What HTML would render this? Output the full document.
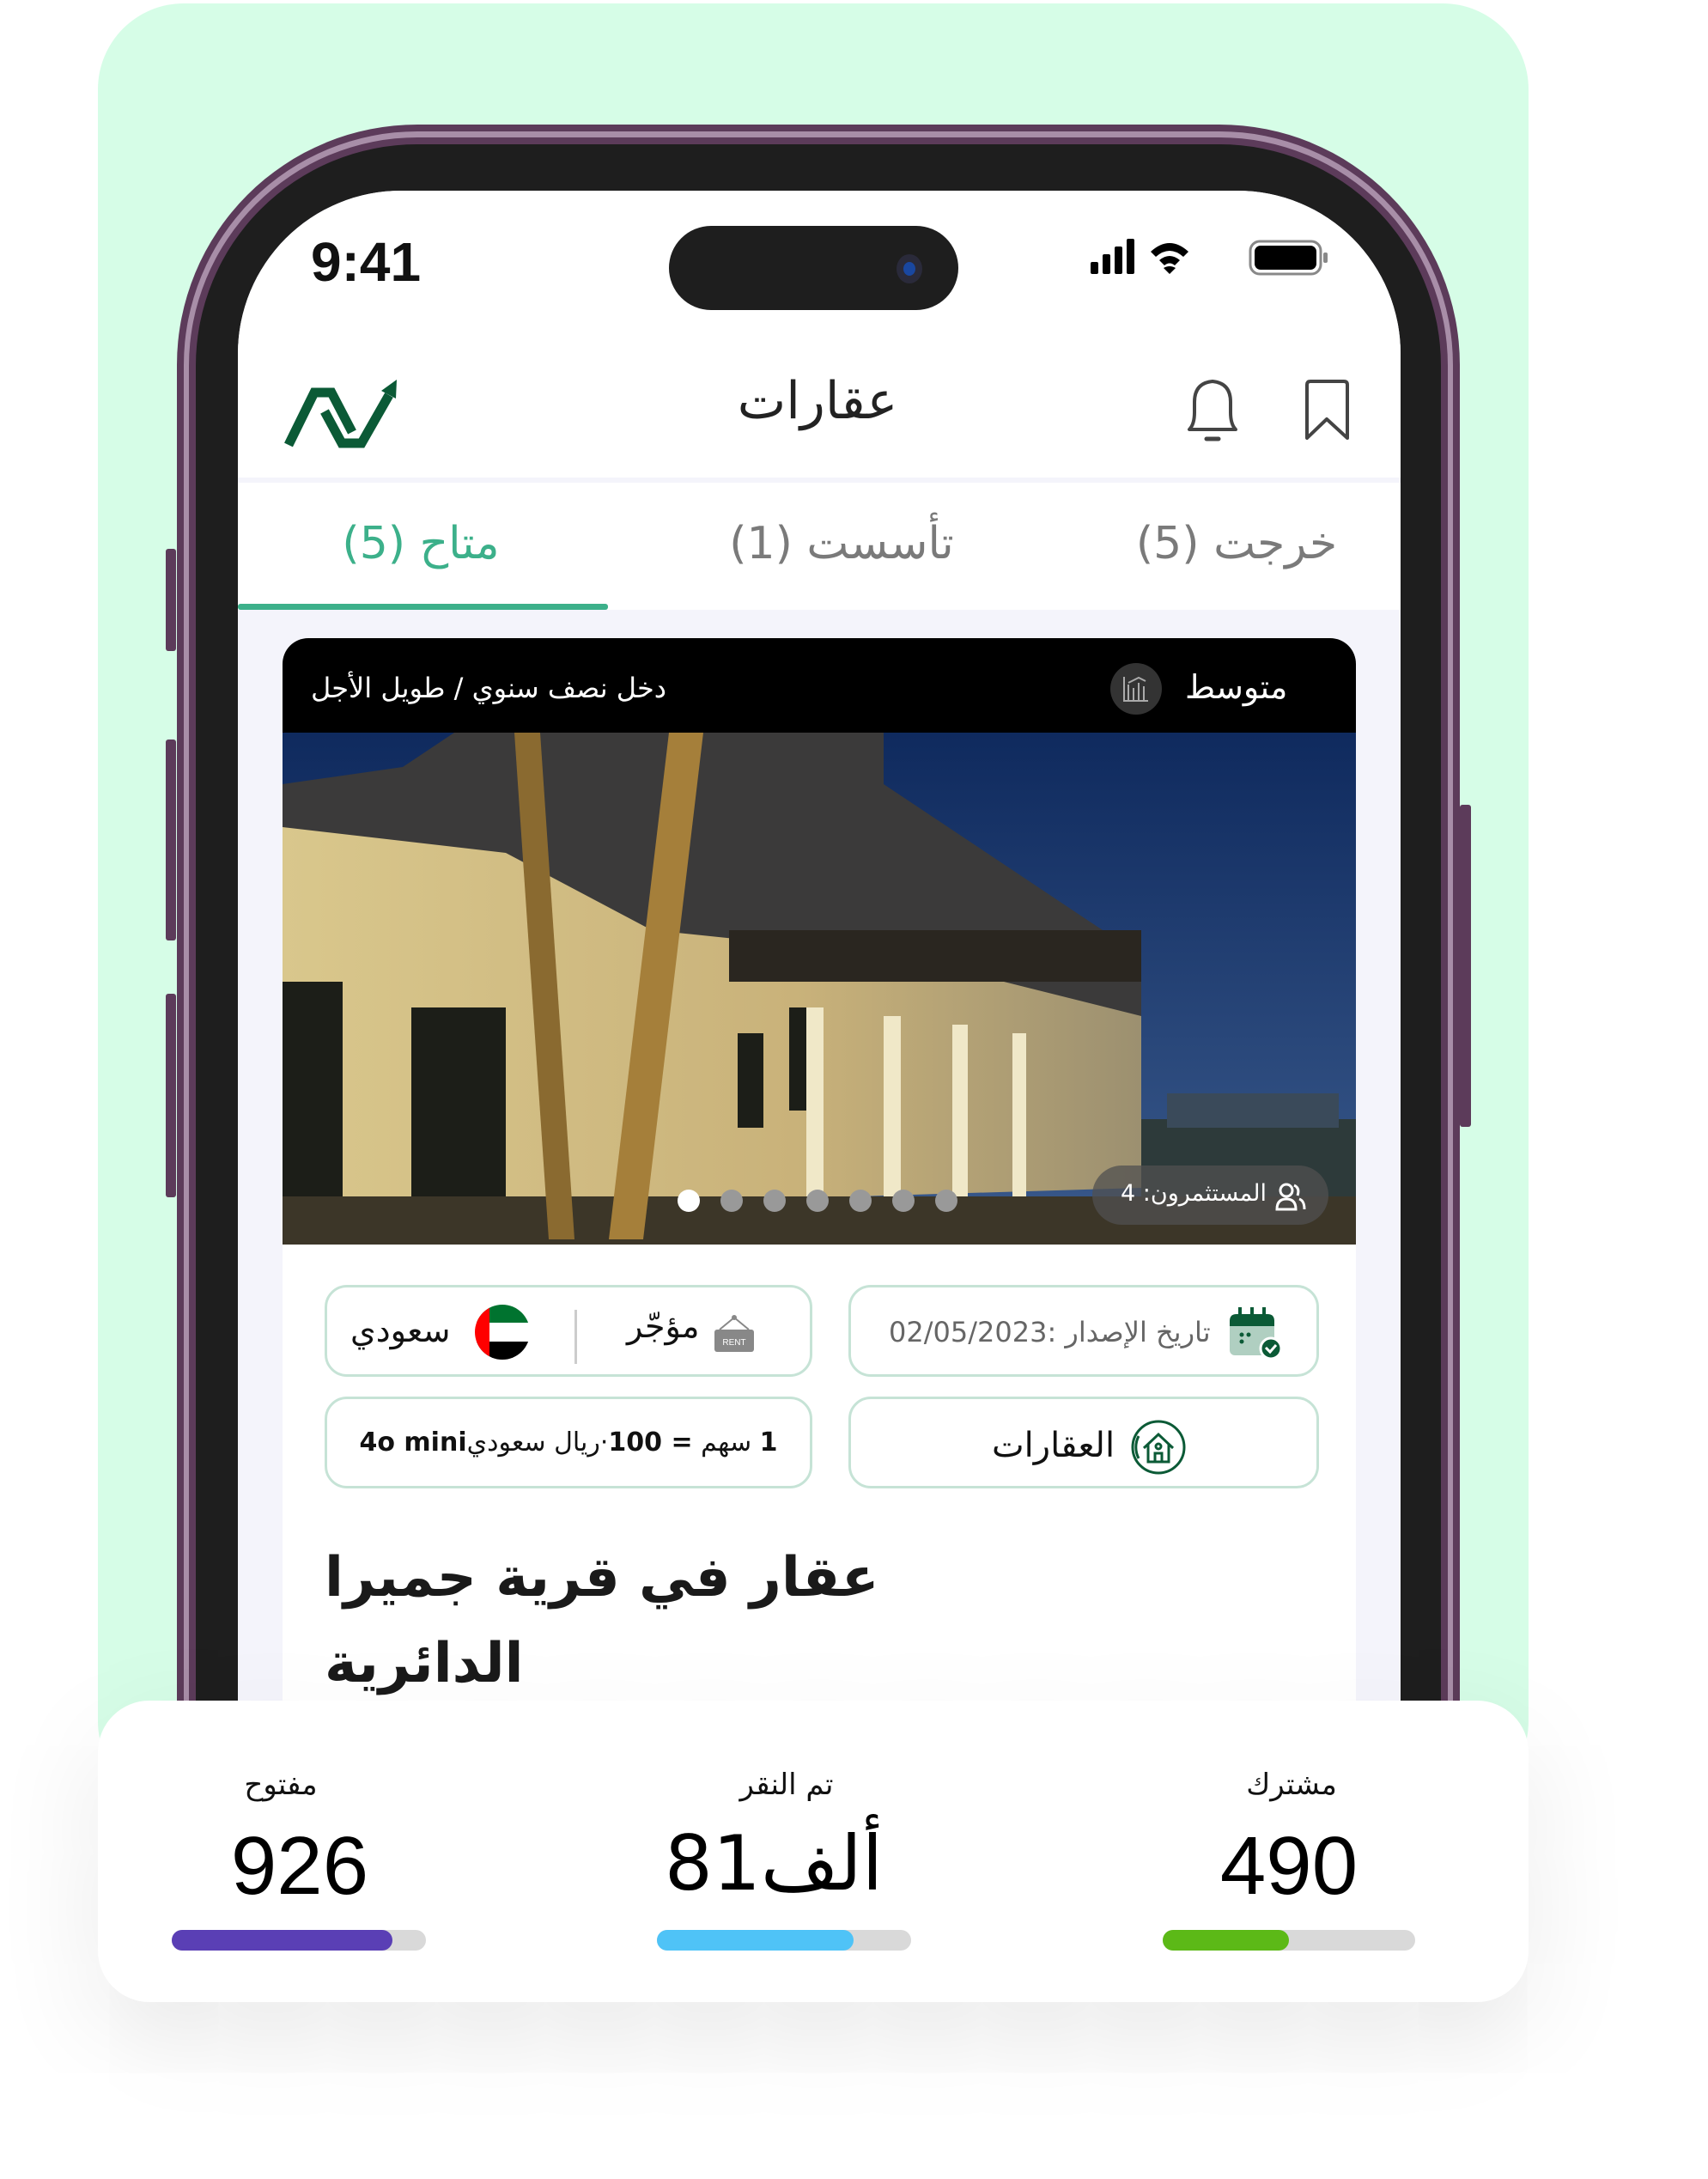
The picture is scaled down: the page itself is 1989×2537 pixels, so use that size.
<!DOCTYPE html>
<html><head><meta charset="utf-8"><style>
*{margin:0;padding:0;box-sizing:border-box}
body{width:1989px;height:2537px;background:#fff;position:relative;overflow:hidden;font-family:"DejaVu Sans","Liberation Sans",sans-serif}
.a{position:absolute}
.ar{font-family:"DejaVu Sans","Liberation Sans",sans-serif;white-space:nowrap}
.chip{position:absolute;border:3px solid #c6e3d6;border-radius:26px;background:#fff}
</style></head><body>
<div class="a" style="left:114px;top:4px;width:1666px;height:2100px;background:#d6fde7;border-radius:100px"></div>
<div class="a" style="left:0;top:0;width:1989px;height:2000px;overflow:hidden">
<!-- phone -->
<div class="a" style="left:206px;top:145px;width:1494px;height:2300px;background:#5c3b5a;border-radius:280px 280px 0 0"></div>
<div class="a" style="left:214px;top:153px;width:1478px;height:2300px;background:#a88ea8;border-radius:272px 272px 0 0"></div>
<div class="a" style="left:220px;top:160px;width:1466px;height:2300px;background:#5c3b5a;border-radius:266px 266px 0 0"></div>
<div class="a" style="left:228px;top:168px;width:1450px;height:2300px;background:#1e1e1e;border-radius:258px 258px 0 0"></div>
<div class="a" style="left:193px;top:639px;width:12px;height:119px;background:#5c3b5a;border-radius:3px"></div>
<div class="a" style="left:193px;top:861px;width:12px;height:234px;background:#5c3b5a;border-radius:3px"></div>
<div class="a" style="left:193px;top:1157px;width:12px;height:237px;background:#5c3b5a;border-radius:3px"></div>
<div class="a" style="left:1700px;top:937px;width:13px;height:375px;background:#5c3b5a;border-radius:3px"></div>
<!-- screen -->
<div class="a" style="left:277px;top:222px;width:1354px;height:2300px;background:#f4f4fb;border-radius:190px 190px 0 0;overflow:hidden">
  <div class="a" style="left:0;top:0;width:1354px;height:334px;background:#fff"></div>
  <div class="a" style="left:0;top:340px;width:1354px;height:148px;background:#fff"></div>
  <div class="a" style="left:0;top:481px;width:431px;height:7px;background:#3cb08a;border-radius:3px"></div>
</div>
<div class="a" style="left:362px;top:268px;font:600 64px 'Liberation Sans',sans-serif;color:#111">9:41</div>
<div class="a" style="left:779px;top:263px;width:337px;height:98px;background:#1e1e1e;border-radius:49px"></div>
<div class="a" style="left:1044px;top:296px;width:30px;height:34px;background:#2a2a3a;border-radius:50%"><div style="margin:9px 8px;width:14px;height:16px;border-radius:50%;background:#1947a0"></div></div>
<svg class="a" style="left:1270px;top:275px" width="280" height="50" viewBox="0 0 280 50">
<rect x="0" y="30" width="9" height="14" rx="2" fill="#000"/><rect x="14" y="21" width="9" height="23" rx="2" fill="#000"/><rect x="28" y="12" width="9" height="32" rx="2" fill="#000"/><rect x="42" y="3" width="9" height="41" rx="2" fill="#000"/>
<path d="M70 18 Q92 -2 114 18 L108 24 Q92 10 76 24Z M80 28 Q92 18 104 28 L98 34 Q92 29 86 34Z M92 44 L85 37 Q92 33 99 37Z" fill="#000"/>
<rect x="186" y="6" width="82" height="38" rx="11" fill="none" stroke="#888" stroke-width="3"/><rect x="191" y="11" width="72" height="28" rx="7" fill="#000"/><rect x="271" y="19" width="5" height="12" rx="2" fill="#888"/>
</svg>
<!-- header -->
<svg class="a" style="left:320px;top:430px" width="160" height="100" viewBox="320 430 160 100">
<path d="M336 518 L366 457 L386 457 L410 503" fill="none" stroke="#0b5a36" stroke-width="11"/>
<path d="M378 479 L398 516 L421 516 L453 460" fill="none" stroke="#0b5a36" stroke-width="11"/>
<polygon points="444,455 462,442 461,464" fill="#0b5a36"/>
</svg>
<div class="a ar" style="left:752px;top:432px;width:400px;text-align:center;font-size:60px;color:#222">عقارات</div>
<svg class="a" style="left:1377px;top:440px" width="200" height="75" viewBox="0 0 200 75">
<path d="M8 60 L62 60 Q56 54 56 40 L56 28 Q56 6 35 4 Q14 6 14 28 L14 40 Q14 54 8 60Z" fill="none" stroke="#444" stroke-width="4" stroke-linejoin="round"/>
<line x1="28" y1="71" x2="42" y2="71" stroke="#444" stroke-width="5" stroke-linecap="round"/>
<path d="M145 70 L145 8 Q145 4 149 4 L188 4 Q192 4 192 8 L192 70 L168 48Z" fill="none" stroke="#444" stroke-width="4" stroke-linejoin="round"/>
</svg>
<!-- tabs -->
<div class="a ar" style="left:330px;top:603px;width:320px;text-align:center;font-size:52px;color:#3cb08a">متاح (5)</div>
<div class="a ar" style="left:800px;top:603px;width:360px;text-align:center;font-size:52px;color:#7a7a7a">تأسست (1)</div>
<div class="a ar" style="left:1280px;top:603px;width:320px;text-align:center;font-size:52px;color:#7a7a7a">خرجت (5)</div>
<!-- card -->
<div class="a" style="left:329px;top:743px;width:1250px;height:1800px;background:#fff;border-radius:30px 30px 0 0;overflow:hidden">
  <div class="a" style="left:0;top:0;width:1250px;height:110px;background:#000"></div>
  <svg class="a" style="left:0;top:110px" width="1250" height="596" viewBox="0 0 1250 596">
    <defs>
      <linearGradient id="sky" x1="0" y1="0" x2="0" y2="1"><stop offset="0" stop-color="#0f2a5e"/><stop offset="1" stop-color="#3a5a8c"/></linearGradient>
      <linearGradient id="bld" x1="0" y1="0" x2="1" y2="0"><stop offset="0" stop-color="#d9c78c"/><stop offset=".6" stop-color="#c9b27a"/><stop offset="1" stop-color="#9c9070"/></linearGradient>
    </defs>
    <rect width="1250" height="596" fill="url(#sky)"/>
    <polygon points="0,60 140,40 200,0 700,0 700,60 1000,260 1000,500 0,540" fill="#3b3a3a"/>
    <polygon points="0,110 260,140 430,230 720,260 1000,330 1000,530 0,560" fill="url(#bld)"/>
    <rect x="0" y="540" width="1250" height="56" fill="#3c3628"/>
    <rect x="1000" y="450" width="250" height="90" fill="#2d3a3a"/>
    <rect x="1030" y="420" width="200" height="40" fill="#3a4a5a"/>
    <g fill="#1c1e18"><rect x="0" y="290" width="70" height="250"/><rect x="150" y="320" width="110" height="220"/><rect x="530" y="350" width="30" height="110"/><rect x="590" y="320" width="30" height="120"/></g>
    <rect x="520" y="230" width="480" height="60" fill="#2a2620"/>
    <polygon points="270,0 310,590 340,590 300,0" fill="#8a6a30"/>
    <polygon points="450,0 380,590 420,590 490,0" fill="#a57f3a"/>
    <g fill="#f0e8c8"><rect x="610" y="320" width="20" height="220"/><rect x="700" y="330" width="20" height="210"/><rect x="780" y="340" width="18" height="200"/><rect x="850" y="350" width="16" height="190"/></g>
  </svg>
  <div class="a" style="left:943px;top:614px;width:275px;height:69px;background:rgba(80,80,80,.75);border-radius:35px"></div>
</div>
<div class="a ar" style="left:362px;top:782px;font-size:32px;color:#fff">دخل نصف سنوي / طويل الأجل</div>
<div class="a" style="left:1293px;top:772px;width:60px;height:60px;border-radius:50%;background:#333"></div>
<svg class="a" style="left:1306px;top:785px" width="34" height="34" viewBox="0 0 34 34" fill="none" stroke="#aaa" stroke-width="2"><path d="M3 3 V31 H31 M8 12 V31 M14 16 V31 M20 10 V31 M26 14 V31 M8 10 L20 4 L28 8"/></svg>
<div class="a ar" style="left:1380px;top:778px;font-size:38px;color:#fff">متوسط</div>
<div class="a ar" style="left:1305px;top:1374px;font-size:27px;color:#fff">المستثمرون: 4</div>
<svg class="a" style="left:1485px;top:1376px" width="36" height="34" viewBox="0 0 36 34" fill="none" stroke="#fff" stroke-width="3"><circle cx="13" cy="10" r="7"/><path d="M2 32 Q2 20 13 20 Q24 20 24 32Z"/><path d="M22 4 Q29 7 26 16 M28 20 Q34 22 34 32"/></svg>
<div class="a" style="left:789px;top:1385px;width:26px;height:26px;border-radius:50%;background:#fff"></div>
<div class="a" style="left:839px;top:1385px;width:26px;height:26px;border-radius:50%;background:#999"></div>
<div class="a" style="left:889px;top:1385px;width:26px;height:26px;border-radius:50%;background:#999"></div>
<div class="a" style="left:939px;top:1385px;width:26px;height:26px;border-radius:50%;background:#999"></div>
<div class="a" style="left:989px;top:1385px;width:26px;height:26px;border-radius:50%;background:#999"></div>
<div class="a" style="left:1039px;top:1385px;width:26px;height:26px;border-radius:50%;background:#999"></div>
<div class="a" style="left:1089px;top:1385px;width:26px;height:26px;border-radius:50%;background:#999"></div>
<!-- chips -->
<div class="chip" style="left:378px;top:1496px;width:568px;height:107px"></div>
<div class="a ar" style="left:408px;top:1527px;font-size:38px;color:#111">سعودي</div>
<svg class="a" style="left:552px;top:1518px" width="66" height="66" viewBox="0 0 66 66"><defs><clipPath id="c"><circle cx="33" cy="33" r="32"/></clipPath></defs><g clip-path="url(#c)"><rect width="66" height="22" fill="#00732f"/><rect y="22" width="66" height="22" fill="#fff"/><rect y="44" width="66" height="22" fill="#000"/><rect width="18" height="66" fill="#f00"/></g></svg>
<div class="a" style="left:669px;top:1525px;width:3px;height:63px;background:#ccc"></div>
<div class="a ar" style="left:730px;top:1522px;font-size:38px;color:#111">مؤجّر</div>
<svg class="a" style="left:830px;top:1530px" width="50" height="45" viewBox="0 0 50 45"><path d="M8 18 L25 4 L42 18" fill="none" stroke="#888" stroke-width="2"/><circle cx="25" cy="4" r="3" fill="#888"/><rect x="2" y="18" width="46" height="26" rx="3" fill="#888"/><text x="25" y="36" font-size="10" fill="#fff" text-anchor="middle" font-family="Liberation Sans">RENT</text></svg>
<div class="chip" style="left:988px;top:1496px;width:548px;height:107px"></div>
<div class="a ar" style="left:1035px;top:1532px;font-size:32px;color:#666">تاريخ الإصدار :02/05/2023</div>
<svg class="a" style="left:1430px;top:1520px" width="66" height="64" viewBox="0 0 66 64"><rect x="2" y="12" width="52" height="46" rx="6" fill="#b0cfc1"/><path d="M2 18 Q2 10 10 10 L46 10 Q54 10 54 18 L54 24 L2 24Z" fill="#0b5a36"/><rect x="12" y="2" width="4" height="10" fill="#0b5a36"/><rect x="26" y="2" width="4" height="10" fill="#0b5a36"/><rect x="40" y="2" width="4" height="10" fill="#0b5a36"/><circle cx="16" cy="34" r="2.5" fill="#0b5a36"/><circle cx="24" cy="34" r="2.5" fill="#0b5a36"/><circle cx="16" cy="42" r="2.5" fill="#0b5a36"/><circle cx="50" cy="50" r="12" fill="#0b5a36" stroke="#fff" stroke-width="3"/><path d="M44 49 L49 54 L56 46" fill="none" stroke="#fff" stroke-width="3"/></svg>
<div class="chip" style="left:378px;top:1626px;width:568px;height:107px"></div>
<div class="a ar" style="left:378px;top:1662px;width:568px;text-align:center;font-size:30px;color:#111;direction:rtl"><b>1</b> سهم <b>= 100</b>·ريال سعودي<b dir="ltr">4o mini</b></div>
<div class="chip" style="left:988px;top:1626px;width:548px;height:107px"></div>
<div class="a ar" style="left:1155px;top:1660px;font-size:40px;color:#111">العقارات</div>
<svg class="a" style="left:1316px;top:1652px" width="66" height="66" viewBox="0 0 66 66" fill="none" stroke="#0b5a36" stroke-width="3"><circle cx="33" cy="33" r="30"/><path d="M10 20 A28 28 0 0 0 10 46"/><path d="M16 34 L33 18 L50 34 M21 30 V50 H45 V30 M29 50 V40 H37 V50"/><circle cx="33" cy="32" r="3"/></svg>
<div class="a ar" style="left:378px;top:1800px;font-size:64px;font-weight:bold;color:#1a1a1a">عقار في قرية جميرا</div>
<div class="a ar" style="left:378px;top:1900px;font-size:64px;font-weight:bold;color:#1a1a1a">الدائرية</div>
</div>
<!-- bottom card -->
<div class="a" style="left:114px;top:1980px;width:1666px;height:351px;background:#fff;border-radius:60px;box-shadow:0 40px 120px rgba(0,0,0,.10)"></div>
<div class="a ar" style="left:227px;top:2058px;width:200px;text-align:center;font-size:34px;color:#111">مفتوح</div>
<div class="a ar" style="left:816px;top:2058px;width:200px;text-align:center;font-size:34px;color:#111">تم النقر</div>
<div class="a ar" style="left:1404px;top:2058px;width:200px;text-align:center;font-size:34px;color:#111">مشترك</div>
<div class="a" style="left:199px;top:2118px;width:300px;text-align:center;font:96px 'Liberation Sans',sans-serif;color:#000">926</div>
<div class="a ar" style="left:751px;top:2118px;width:300px;text-align:center;font-size:88px;color:#000;direction:ltr">81ألف</div>
<div class="a" style="left:1351px;top:2118px;width:300px;text-align:center;font:96px 'Liberation Sans',sans-serif;color:#000">490</div>
<div class="a" style="left:200px;top:2247px;width:296px;height:24px;background:#d9d9d9;border-radius:12px"><div style="width:257px;height:24px;background:#5a3fb5;border-radius:12px"></div></div>
<div class="a" style="left:765px;top:2247px;width:296px;height:24px;background:#d9d9d9;border-radius:12px"><div style="width:229px;height:24px;background:#4fc3f7;border-radius:12px"></div></div>
<div class="a" style="left:1354px;top:2247px;width:294px;height:24px;background:#d9d9d9;border-radius:12px"><div style="width:147px;height:24px;background:#5cb917;border-radius:12px"></div></div>
</body></html>
